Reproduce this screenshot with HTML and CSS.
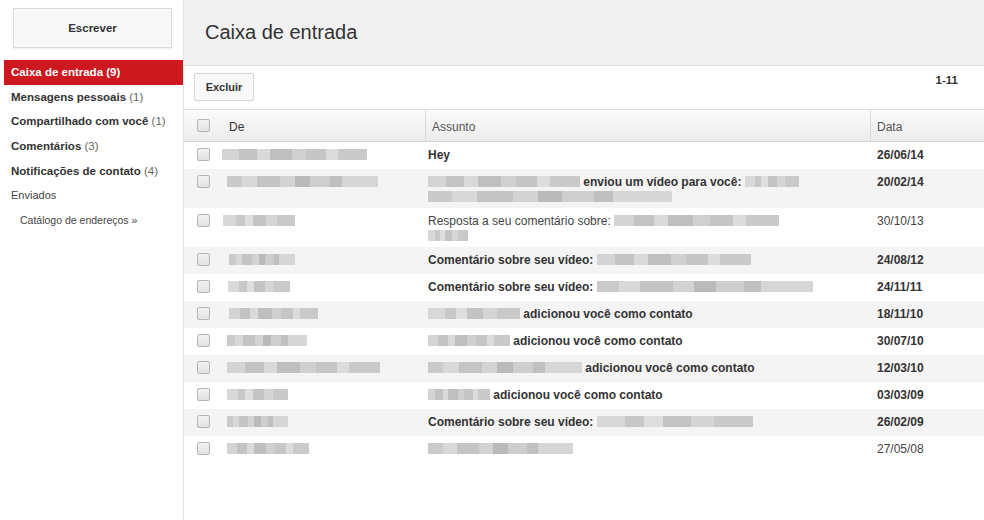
FILE: index.html
```html
<!DOCTYPE html>
<html lang="pt">
<head>
<meta charset="utf-8">
<title>Caixa de entrada</title>
<link rel="stylesheet" href="styles.css">
</head>
<body>
<div class="app">
  <aside class="sidebar">
    <button class="compose">Escrever</button>
    <nav class="nav">
      <a class="item active">Caixa de entrada <span class="count">(9)</span></a>
      <a class="item">Mensagens pessoais <span class="count">(1)</span></a>
      <a class="item">Compartilhado com você <span class="count">(1)</span></a>
      <a class="item">Comentários <span class="count">(3)</span></a>
      <a class="item">Notificações de contato <span class="count">(4)</span></a>
      <a class="item small">Enviados</a>
      <a class="item small indent">Catálogo de endereços »</a>
    </nav>
  </aside>
  <main class="main">
    <header class="head"><h1>Caixa de entrada</h1></header>
    <div class="toolbar">
      <button class="btn">Excluir</button>
      <span class="pager">1-11</span>
    </div>
    <div class="table">
      <div class="thead">
        <div class="c-chk"><span class="chk"></span></div>
        <div class="c-from">De</div>
        <div class="c-subj">Assunto</div>
        <div class="c-date">Data</div>
      </div>

      <div class="row unread">
        <div class="c-chk"><span class="chk"></span></div>
        <div class="c-from"><span class="blur b1" style="width:145px"></span></div>
        <div class="c-subj">Hey</div>
        <div class="c-date">26/06/14</div>
      </div>

      <div class="row unread alt two">
        <div class="c-chk"><span class="chk"></span></div>
        <div class="c-from"><span class="blur b2 ml5" style="width:151px"></span></div>
        <div class="c-subj"><span class="blur b1" style="width:152px"></span> enviou um vídeo para você: <span class="blur b3" style="width:54px"></span><br><span class="blur b2" style="width:244px"></span></div>
        <div class="c-date">20/02/14</div>
      </div>

      <div class="row two">
        <div class="c-chk"><span class="chk"></span></div>
        <div class="c-from"><span class="blur b3 ml1" style="width:72px"></span></div>
        <div class="c-subj">Resposta a seu comentário sobre: <span class="blur b1" style="width:165px"></span><br><span class="blur b3" style="width:40px"></span></div>
        <div class="c-date">30/10/13</div>
      </div>

      <div class="row unread alt">
        <div class="c-chk"><span class="chk"></span></div>
        <div class="c-from"><span class="blur b2 ml7" style="width:66px"></span></div>
        <div class="c-subj">Comentário sobre seu vídeo: <span class="blur b1" style="width:154px"></span></div>
        <div class="c-date">24/08/12</div>
      </div>

      <div class="row unread">
        <div class="c-chk"><span class="chk"></span></div>
        <div class="c-from"><span class="blur b3 ml6" style="width:62px"></span></div>
        <div class="c-subj">Comentário sobre seu vídeo: <span class="blur b2" style="width:216px"></span></div>
        <div class="c-date">24/11/11</div>
      </div>

      <div class="row unread alt">
        <div class="c-chk"><span class="chk"></span></div>
        <div class="c-from"><span class="blur b1 ml7" style="width:89px"></span></div>
        <div class="c-subj"><span class="blur b3" style="width:92px"></span> adicionou você como contato</div>
        <div class="c-date">18/11/10</div>
      </div>

      <div class="row unread">
        <div class="c-chk"><span class="chk"></span></div>
        <div class="c-from"><span class="blur b2 ml5" style="width:80px"></span></div>
        <div class="c-subj"><span class="blur b1" style="width:82px"></span> adicionou você como contato</div>
        <div class="c-date">30/07/10</div>
      </div>

      <div class="row unread alt">
        <div class="c-chk"><span class="chk"></span></div>
        <div class="c-from"><span class="blur b1 ml5" style="width:153px"></span></div>
        <div class="c-subj"><span class="blur b2" style="width:154px"></span> adicionou você como contato</div>
        <div class="c-date">12/03/10</div>
      </div>

      <div class="row unread">
        <div class="c-chk"><span class="chk"></span></div>
        <div class="c-from"><span class="blur b3 ml5" style="width:61px"></span></div>
        <div class="c-subj"><span class="blur b1" style="width:62px"></span> adicionou você como contato</div>
        <div class="c-date">03/03/09</div>
      </div>

      <div class="row unread alt">
        <div class="c-chk"><span class="chk"></span></div>
        <div class="c-from"><span class="blur b2 ml5" style="width:61px"></span></div>
        <div class="c-subj">Comentário sobre seu vídeo: <span class="blur b3" style="width:156px"></span></div>
        <div class="c-date">26/02/09</div>
      </div>

      <div class="row">
        <div class="c-chk"><span class="chk"></span></div>
        <div class="c-from"><span class="blur b1 ml5" style="width:82px"></span></div>
        <div class="c-subj"><span class="blur b2" style="width:145px"></span></div>
        <div class="c-date">27/05/08</div>
      </div>
    </div>
  </main>
</div>
</body>
</html>
```

FILE: styles.css
```css
* { box-sizing: border-box; }
html, body { margin: 0; padding: 0; }
body {
  width: 984px;
  height: 520px;
  overflow: hidden;
  background: #fff;
  font-family: "Liberation Sans", Arial, sans-serif;
  font-size: 12px;
  color: #333;
}
.app { display: flex; height: 520px; }

.sidebar {
  width: 184px;
  flex: none;
  border-right: 1px solid #e3e3e3;
  padding-top: 8px;
}
.compose {
  display: block;
  width: 159px;
  height: 40px;
  margin: 0 0 0 13px;
  background: #f8f8f8;
  border: 1px solid #dcdcdc;
  box-shadow: 0 1px 1px rgba(0,0,0,0.05);
  font-family: inherit;
  font-size: 11.5px;
  font-weight: bold;
  color: #333;
  padding: 0;
}
.nav { margin-top: 12px; display: flex; flex-direction: column; }
.item {
  display: block;
  height: 24.7px;
  line-height: 24px;
  padding-left: 11px;
  font-weight: bold;
  font-size: 11.5px;
  color: #333;
  white-space: nowrap;
}
.item .count { font-weight: normal; color: #666; }
.item.active {
  margin-left: 4px;
  padding-left: 7px;
  background: #cc181e;
  color: #fff;
}
.item.active .count { color: #fff; font-weight: bold; }
.item.small { font-weight: normal; font-size: 11px; color: #444; }
.item.indent { padding-left: 20px; font-size: 10.5px; }

.main { flex: 1; display: flex; flex-direction: column; min-width: 0; }
.head {
  height: 66px;
  background: #f1f1f1;
  border-bottom: 1px solid #dedede;
  padding-left: 21px;
  display: flex;
  align-items: center;
}
.head h1 {
  margin: 0;
  font-size: 20px;
  font-weight: normal;
  color: #333;
}
.toolbar {
  height: 44px;
  display: flex;
  justify-content: space-between;
  align-items: flex-start;
  padding: 7px 26px 0 10px;
  border-bottom: 1px solid #dcdcdc;
}
.btn {
  width: 60px;
  height: 28px;
  background: #f8f8f8;
  border: 1px solid #d6d6d6;
  border-radius: 2px;
  font-family: inherit;
  font-size: 11px;
  font-weight: bold;
  color: #333;
  padding: 0;
}
.pager { font-weight: bold; font-size: 11.5px; margin-top: 1px; }

.table { display: flex; flex-direction: column; }
.thead, .row {
  display: grid;
  grid-template-columns: 38px 203px 445px 1fr;
}
.thead {
  height: 32px;
  background: linear-gradient(#fbfbfb, #ececec);
  border-bottom: 1px solid #d6d6d6;
  color: #555;
  font-size: 12px;
}
.thead > div { display: flex; align-items: center; padding-top: 3px; }
.thead .c-chk { padding-left: 13px; padding-top: 0; }
.thead .c-from { padding-left: 7px; color: #333; }
.thead .c-subj { border-left: 1px solid #d8d8d8; padding-left: 6px; }
.thead .c-date { border-left: 1px solid #d8d8d8; padding-left: 6px; }

.row { padding: 6px 0 6px; line-height: 15px; color: #444; }
.row.two { padding-bottom: 3px; }
.row.alt { background: #f4f4f4; }
.row.unread { font-weight: bold; color: #333; }
.row .c-chk { padding-left: 13px; }
.row .c-subj { padding-left: 3px; }
.row .c-date { padding-left: 7px; }

.chk {
  display: block;
  width: 13px;
  height: 13px;
  border: 1px solid #b5b5b5;
  border-radius: 2px;
  background: linear-gradient(#f2f2f2, #e2e2e2);
}

.blur {
  display: inline-block;
  height: 11px;
  vertical-align: -1px;
}
.ml1 { margin-left: 1px; }
.ml5 { margin-left: 5px; }
.ml6 { margin-left: 6px; }
.ml7 { margin-left: 7px; }
.b1 {
  background: linear-gradient(90deg, #d4d4d4 0 12%, #c3c3c3 12% 24%, #dadada 24% 33%, #bfbfbf 33% 48%, #d0d0d0 48% 58%, #c6c6c6 58% 72%, #dcdcdc 72% 80%, #cacaca 80% 100%);
}
.b2 {
  background: linear-gradient(90deg, #cacaca 0 10%, #d8d8d8 10% 20%, #c4c4c4 20% 35%, #d3d3d3 35% 45%, #bababa 45% 55%, #cecece 55% 68%, #c0c0c0 68% 76%, #d6d6d6 76% 100%);
}
.b3 {
  background: linear-gradient(90deg, #d8d8d8 0 18%, #c8c8c8 18% 30%, #dedede 30% 42%, #c3c3c3 42% 60%, #d5d5d5 60% 75%, #c9c9c9 75% 100%);
}
```
